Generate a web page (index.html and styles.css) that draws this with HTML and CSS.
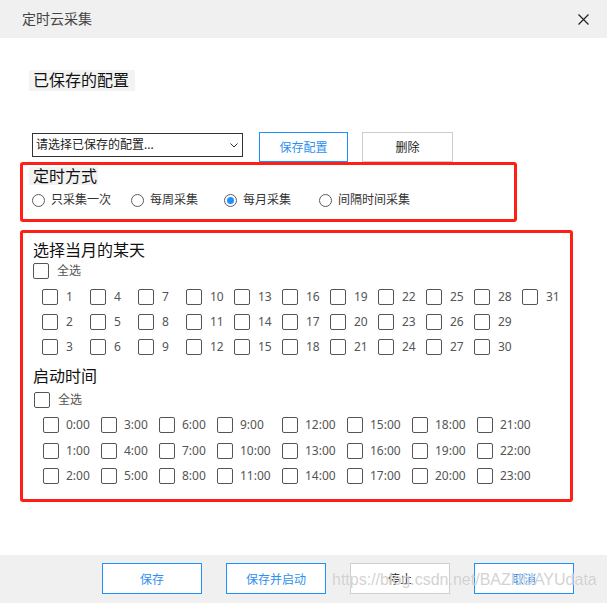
FILE: index.html
```html
<!DOCTYPE html>
<html lang="zh-CN">
<head>
<meta charset="utf-8">
<title>定时云采集</title>
<link rel="stylesheet" href="styles.css">
</head>
<body>
<div class="dialog">
  <header class="titlebar">
    <span class="title">定时云采集</span>
    <svg class="close" viewBox="0 0 11 11" width="11" height="11"><path d="M0.5 0.5 L10.5 10.5 M10.5 0.5 L0.5 10.5" stroke="#222" stroke-width="1.2" fill="none"/></svg>
  </header>
  <main class="content">
    <div class="saved-label">已保存的配置</div>
    <div class="config-row">
      <div class="select">
        <span>请选择已保存的配置...</span>
        <svg class="chevron" viewBox="0 0 8 5" width="8" height="5"><path d="M0.5 0.5 L4 4 L7.5 0.5" stroke="#333" stroke-width="1" fill="none"/></svg>
      </div>
      <button class="btn btn-save-cfg">保存配置</button>
      <button class="btn btn-del">删除</button>
    </div>

    <section class="mark mark-mode">
      <div class="shaded-title">定时方式</div>
      <div class="radios">
        <label class="radio-item"><span class="radio"></span>只采集一次</label>
        <label class="radio-item"><span class="radio"></span>每周采集</label>
        <label class="radio-item"><span class="radio on"></span>每月采集</label>
        <label class="radio-item"><span class="radio"></span>间隔时间采集</label>
      </div>
    </section>

    <section class="mark mark-days">
      <div class="section-title">选择当月的某天</div>
      <div class="check-all"><span class="box"></span>全选</div>
      <div class="day-grid">
        <div class="cell"><span class="box"></span>1</div>
        <div class="cell"><span class="box"></span>2</div>
        <div class="cell"><span class="box"></span>3</div>
        <div class="cell"><span class="box"></span>4</div>
        <div class="cell"><span class="box"></span>5</div>
        <div class="cell"><span class="box"></span>6</div>
        <div class="cell"><span class="box"></span>7</div>
        <div class="cell"><span class="box"></span>8</div>
        <div class="cell"><span class="box"></span>9</div>
        <div class="cell"><span class="box"></span>10</div>
        <div class="cell"><span class="box"></span>11</div>
        <div class="cell"><span class="box"></span>12</div>
        <div class="cell"><span class="box"></span>13</div>
        <div class="cell"><span class="box"></span>14</div>
        <div class="cell"><span class="box"></span>15</div>
        <div class="cell"><span class="box"></span>16</div>
        <div class="cell"><span class="box"></span>17</div>
        <div class="cell"><span class="box"></span>18</div>
        <div class="cell"><span class="box"></span>19</div>
        <div class="cell"><span class="box"></span>20</div>
        <div class="cell"><span class="box"></span>21</div>
        <div class="cell"><span class="box"></span>22</div>
        <div class="cell"><span class="box"></span>23</div>
        <div class="cell"><span class="box"></span>24</div>
        <div class="cell"><span class="box"></span>25</div>
        <div class="cell"><span class="box"></span>26</div>
        <div class="cell"><span class="box"></span>27</div>
        <div class="cell"><span class="box"></span>28</div>
        <div class="cell"><span class="box"></span>29</div>
        <div class="cell"><span class="box"></span>30</div>
        <div class="cell"><span class="box"></span>31</div>
      </div>

      <div class="section-title time-title">启动时间</div>
      <div class="check-all check-all-time"><span class="box"></span>全选</div>
      <div class="time-grid">
        <div class="cell"><span class="box"></span>0:00</div>
        <div class="cell"><span class="box"></span>1:00</div>
        <div class="cell"><span class="box"></span>2:00</div>
        <div class="cell"><span class="box"></span>3:00</div>
        <div class="cell"><span class="box"></span>4:00</div>
        <div class="cell"><span class="box"></span>5:00</div>
        <div class="cell"><span class="box"></span>6:00</div>
        <div class="cell"><span class="box"></span>7:00</div>
        <div class="cell"><span class="box"></span>8:00</div>
        <div class="cell"><span class="box"></span>9:00</div>
        <div class="cell"><span class="box"></span>10:00</div>
        <div class="cell"><span class="box"></span>11:00</div>
        <div class="cell"><span class="box"></span>12:00</div>
        <div class="cell"><span class="box"></span>13:00</div>
        <div class="cell"><span class="box"></span>14:00</div>
        <div class="cell"><span class="box"></span>15:00</div>
        <div class="cell"><span class="box"></span>16:00</div>
        <div class="cell"><span class="box"></span>17:00</div>
        <div class="cell"><span class="box"></span>18:00</div>
        <div class="cell"><span class="box"></span>19:00</div>
        <div class="cell"><span class="box"></span>20:00</div>
        <div class="cell"><span class="box"></span>21:00</div>
        <div class="cell"><span class="box"></span>22:00</div>
        <div class="cell"><span class="box"></span>23:00</div>
      </div>
    </section>
  </main>
  <footer class="footer">
    <button class="fbtn">保存</button>
    <button class="fbtn">保存并启动</button>
    <button class="fbtn fbtn-gray">停止</button>
    <button class="fbtn">取消</button>
  </footer>
  <div class="watermark">https://blog.csdn.net/BAZHUAYUdata</div>
</div>
</body>
</html>
```

FILE: styles.css
```css
* { box-sizing: border-box; }
html, body { margin: 0; padding: 0; background: #fff; }
body {
  font-family: "Noto Sans", "Noto Sans CJK SC", sans-serif;
  color: #333;
}
.dialog {
  position: relative;
  width: 607px;
  height: 603px;
  display: flex;
  flex-direction: column;
  overflow: hidden;
}
.titlebar {
  height: 38px;
  flex: none;
  background: #f0f0f0;
  display: flex;
  align-items: center;
  justify-content: space-between;
  padding: 0 18px 0 22px;
}
.title { font-size: 14px; line-height: 20px; color: #444; }
.close { display: block; }

.content {
  flex: 1;
  padding: 32px 0 0 20px;
}
.saved-label {
  width: max-content;
  margin-left: 9px;
  padding: 0 6px 0 4px;
  height: 21px;
  line-height: 21px;
  font-size: 16px;
  color: #111;
  background: #f3f3f3;
}
.config-row {
  display: flex;
  align-items: flex-start;
  margin-top: 41px;
  height: 30px;
}
.select {
  margin: 1px 0 0 12px;
  width: 211px;
  height: 24px;
  border: 1px solid #333;
  display: flex;
  align-items: center;
  justify-content: space-between;
  padding: 0 4px 0 3px;
  font-size: 12px;
  line-height: 16px;
  color: #222;
}
.chevron { display: block; }
.btn {
  height: 30px;
  padding: 0;
  font-family: inherit;
  font-size: 12px;
  background: #fff;
  border: 1px solid #cccccc;
  color: #222;
}
.btn-save-cfg {
  margin-left: 16px;
  width: 89px;
  border-color: #1e90ff;
  color: #2f8ff0;
}
.btn-del {
  margin-left: 14px;
  width: 91px;
}

.mark {
  border: 3px solid #ff1f14;
  border-radius: 3px;
}
.mark-mode {
  width: 497px;
  height: 60px;
  padding: 2px 0 0 6px;
}
.shaded-title {
  width: max-content;
  height: 18px;
  line-height: 18px;
  font-size: 16px;
  padding: 0 1px 0 4px;
  background: #f2f2f2;
  color: #111;
}
.radios {
  display: grid;
  grid-template-columns: 99px 93px 95px auto;
  margin: 6px 0 0 3px;
}
.radio-item {
  display: flex;
  align-items: center;
  gap: 6px;
  font-size: 12px;
  line-height: 18px;
  color: #333;
}
.radio {
  width: 13px;
  height: 13px;
  border: 1px solid #5b5b5b;
  border-radius: 50%;
  display: flex;
  align-items: center;
  justify-content: center;
  flex: none;
}
.radio.on::after {
  content: "";
  width: 7px;
  height: 7px;
  border-radius: 50%;
  background: #1e90ff;
}

.mark-days {
  margin-top: 8px;
  width: 553px;
  height: 272px;
  padding: 7px 0 0 10px;
}
.section-title {
  font-size: 16px;
  line-height: 20px;
  color: #111;
}
.check-all {
  display: flex;
  align-items: center;
  gap: 8px;
  margin-top: 3px;
  height: 16px;
  font-size: 12px;
  line-height: 16px;
  color: #555;
}
.box {
  width: 16px;
  height: 16px;
  border: 1px solid #555;
  border-radius: 2px;
  background: #fff;
  flex: none;
}
.day-grid {
  display: grid;
  grid-auto-flow: column;
  grid-template-rows: repeat(3, 16px);
  grid-template-columns: repeat(11, 48px);
  row-gap: 9px;
  margin: 10px 0 0 9px;
}
.cell {
  display: flex;
  align-items: center;
  gap: 8px;
  font-size: 12px;
  line-height: 16px;
  color: #555;
  white-space: nowrap;
}
.time-title { margin-top: 11px; }
.check-all-time { margin: 6px 0 0 1px; }
.time-grid {
  display: grid;
  grid-auto-flow: column;
  grid-template-rows: repeat(3, 16px);
  grid-template-columns: 47px 47px 47px 54px 54px 54px 54px auto;
  column-gap: 11px;
  row-gap: 9.5px;
  margin: 9px 0 0 10px;
}
.time-grid .cell { gap: 7px; }

.footer {
  height: 48px;
  flex: none;
  background: #f0f0f0;
  display: flex;
  align-items: flex-start;
  gap: 24px;
  padding: 8px 0 0 102px;
}
.fbtn {
  width: 100px;
  height: 31px;
  padding: 0;
  font-family: inherit;
  font-size: 12px;
  background: #fff;
  border: 1px solid #1e90ff;
  color: #2f8ff0;
}
.fbtn-gray {
  border-color: #cfcfcf;
  color: #222;
}
.watermark {
  position: absolute;
  left: 332px;
  top: 571px;
  font-family: "Liberation Sans", Arial, sans-serif;
  font-size: 16px;
  line-height: 18px;
  color: rgba(190, 190, 190, 0.7);
  text-shadow: 0 0 1px rgba(255, 255, 255, 0.9);
  white-space: nowrap;
  pointer-events: none;
}
```
